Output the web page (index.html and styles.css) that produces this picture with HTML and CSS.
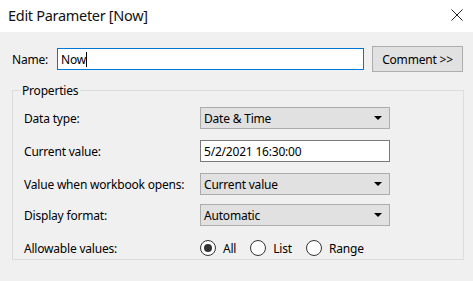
FILE: index.html
```html
<!DOCTYPE html>
<html lang="en">
  <head>
    <meta charset="UTF-8" />
    <title>Edit Parameter [Now]</title>
    <link rel="stylesheet" href="styles.css">
  </head>
  <body>
    <div class="dialog">
      <!-- title bar -->
      <div class="titlebar">
        <span class="title">Edit Parameter [Now]</span>
        <svg class="close" width="12" height="12" viewBox="0 0 12 12">
          <path d="M0.5 0.5 L11.5 11.5 M11.5 0.5 L0.5 11.5" stroke="#222" stroke-width="1" fill="none" />
        </svg>
      </div>

      <div class="content">
        <div class="name-row">
          <label class="name-label">Name:</label>
          <div class="textbox name-box">Now<span class="caret"></span></div>
          <button class="btn">Comment &gt;&gt;</button>
        </div>

        <fieldset class="props">
          <legend>Properties</legend>
          <div class="grid">
            <span class="lbl">Data type:</span>
            <div class="combo">Date &amp; Time<span class="arrow"></span></div>

            <span class="lbl">Current value:</span>
            <div class="textbox value-box">5/2/2021 16:30:00</div>

            <span class="lbl">Value when workbook opens:</span>
            <div class="combo">Current value<span class="arrow"></span></div>

            <span class="lbl">Display format:</span>
            <div class="combo">Automatic<span class="arrow"></span></div>

            <span class="lbl">Allowable values:</span>
            <div class="radios">
              <span class="radio checked"></span><span class="rtext">All</span>
              <span class="radio"></span><span class="rtext">List</span>
              <span class="radio"></span><span class="rtext">Range</span>
            </div>
          </div>
        </fieldset>
      </div>
    </div>
  </body>
</html>
```

FILE: styles.css
```css
body {
  margin: 0;
  font-family: "Noto Sans", "Open Sans", sans-serif;
  font-size: 12px;
  letter-spacing: -0.2px;
  color: #000;
  background-color: #f0f0f0;
}

.dialog {
  width: 473px;
  height: 281px;
  overflow: hidden;
}

.titlebar {
  height: 32px;
  background-color: #fff;
  display: flex;
  align-items: center;
  justify-content: space-between;
  padding: 0 10px 0 8px;
  box-sizing: border-box;
}

.title {
  font-size: 14.5px;
  letter-spacing: -0.3px;
  color: #111;
  margin-top: -2px;
}

.close {
  margin-top: -2px;
}

.content {
  padding: 14px 9px 0 12px;
}

.name-row {
  display: flex;
  align-items: center;
  height: 26px;
}

.name-label {
  width: 45px;
}

.textbox {
  height: 22px;
  box-sizing: border-box;
  background-color: #fff;
  border: 1px solid #7a7a7a;
  padding: 0 3px;
  display: flex;
  align-items: center;
}

.name-box {
  width: 307px;
  border-color: #0078d7;
}

.caret {
  display: inline-block;
  width: 1px;
  height: 15px;
  background-color: #000;
}

.btn {
  margin-left: 8px;
  width: 91px;
  height: 26px;
  font: inherit;
  letter-spacing: inherit;
  color: #000;
  background-color: #e1e1e1;
  border: 1px solid #adadad;
  padding: 0;
}

.props {
  margin: 10px 0 0 0;
  width: 452px;
  height: 178px;
  box-sizing: border-box;
  border: 1px solid #dcdcdc;
  padding: 0 0 0 11px;
}

.props legend {
  padding: 0 2px;
  margin-left: -4px;
}

.grid {
  display: grid;
  grid-template-columns: 176px 190px;
  grid-template-rows: 33px 33px 31px 33px 22px;
  margin-top: 8px;
}

.lbl {
  height: 22px;
  display: flex;
  align-items: center;
}

.combo {
  position: relative;
  height: 22px;
  box-sizing: border-box;
  background-color: #e1e1e1;
  border: 1px solid #adadad;
  padding: 0 3px;
  display: flex;
  align-items: center;
}

.arrow {
  position: absolute;
  right: 7px;
  top: 8px;
  border-left: 4px solid transparent;
  border-right: 4px solid transparent;
  border-top: 4px solid #000;
}

.value-box {
  width: 190px;
}

.radios {
  height: 22px;
  display: flex;
  align-items: center;
}

.radio {
  width: 16px;
  height: 16px;
  box-sizing: border-box;
  border: 1px solid #333;
  border-radius: 50%;
  background-color: #fff;
  position: relative;
}

.radio.checked::after {
  content: "";
  position: absolute;
  left: 3px;
  top: 3px;
  width: 8px;
  height: 8px;
  border-radius: 50%;
  background-color: #333;
}

.rtext {
  margin: 0 14px 0 7px;
}
```
